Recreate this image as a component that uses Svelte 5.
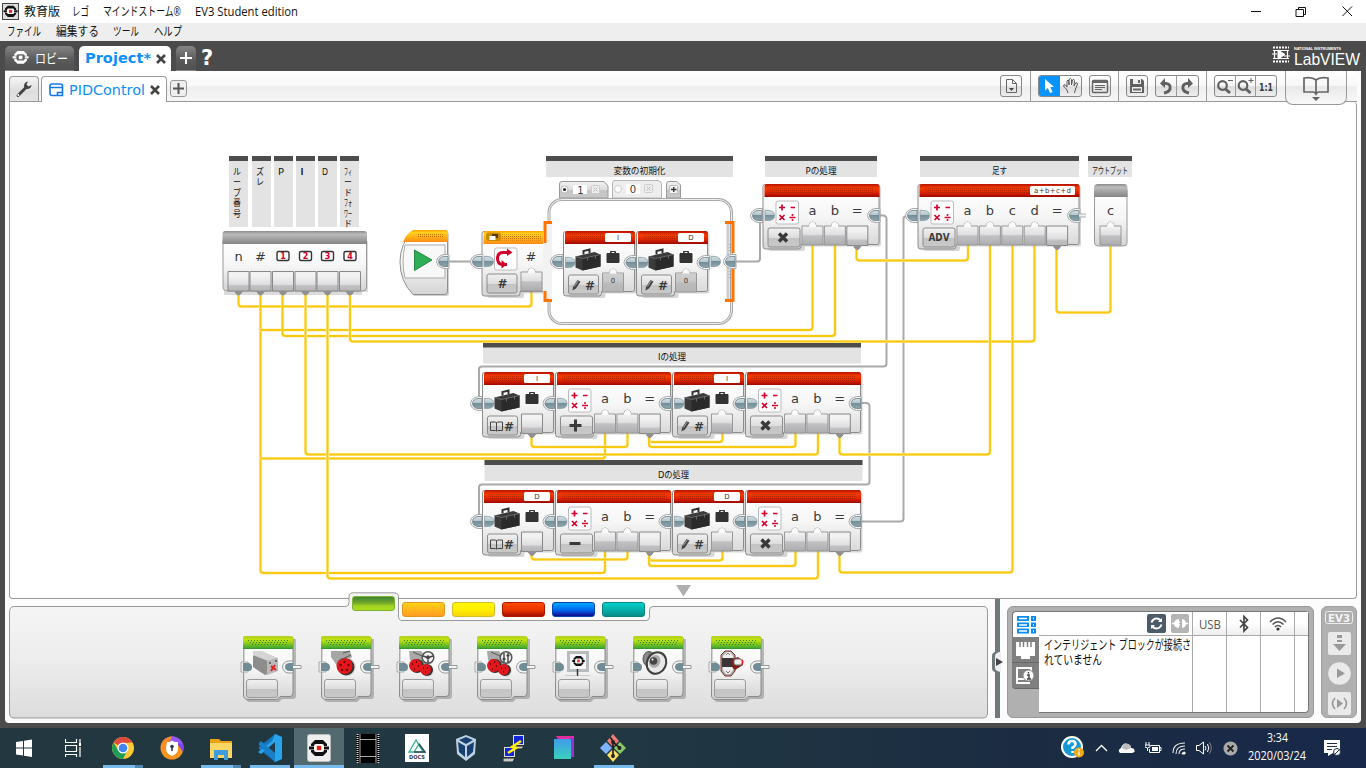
<script>
  const comments = [
    { x: 546, y: 156, w: 187, t: '変数の初期化', tw: 52 },
    { x: 765, y: 156, w: 112, t: 'Pの処理', tw: 31 },
    { x: 920, y: 156, w: 159, t: '足す', tw: 15 },
    { x: 1088, y: 156, w: 44, t: 'アウトプット', tw: 36 },
    { x: 483, y: 342.5, w: 378, t: 'Iの処理', tw: 28 },
    { x: 484.5, y: 460, w: 378, t: 'Dの処理', tw: 31 }
  ];
  const columns = [
    { x: 229, c: ['ル', 'ー', 'プ', '番', '号'] },
    { x: 252, c: ['ズ', 'レ'] },
    { x: 274, c: ['P'] },
    { x: 296, c: ['I'] },
    { x: 318, c: ['D'] },
    { x: 340, c: ['フィ', 'ー', 'ド', 'フォ', 'ワー', 'ド'] }
  ];
  const dataWires = [
    'M238.5 292V303.500Q238.500 306.500 241.500 306.500H528.500Q531.500 306.500 531.500 303.500V289',
    'M260.500 292V570Q260.500 573 263.500 573H602Q605 573 605 570V549',
    'M260.500 330H809.500Q812.500 330 812.500 327V244',
    'M260.500 458.500H602Q605 458.500 605 455.500V431',
    'M282.500 292V333Q282.500 336 285.500 336H832Q835 336 835 333V244',
    'M305.500 292V451.500Q305.500 454.500 308.500 454.500H815Q818 454.500 818 451.500V431',
    'M327.500 292V575.500Q327.500 578.500 330.500 578.500H815Q818 578.500 818 575.500V549',
    'M350 292V338.500Q350 341.500 353 341.500H1031.500Q1034.500 341.500 1034.500 338.500V244',
    'M856.500 246V257.500Q856.500 260.500 859.500 260.500H965Q968 260.500 968 257.500V244',
    'M990 244V451.500Q990 454.500 987 454.500H842.500Q839.500 454.500 839.500 451.500V434',
    'M1012.500 244V569.500Q1012.500 572.500 1009.500 572.500H842.500Q839.500 572.500 839.500 569.500V552',
    'M1056.500 246V309.500Q1056.500 312.500 1059.500 312.500H1107.500Q1110.500 312.500 1110.500 309.500V244',
    'M531.500 434V444Q531.500 447 534.500 447H624.500Q627.500 447 627.500 444V431',
    'M649 434V439Q649 442 652 442H719.500Q722.500 442 722.500 439V431',
    'M649 434V444Q649 447 652 447H792.500Q795.500 447 795.500 444V431',
    'M531.500 552V556.500Q531.500 559.500 534.500 559.500H624.500Q627.500 559.500 627.500 556.500V549',
    'M649 552V557.500Q649 560.500 652 560.500H719.500Q722.500 560.500 722.500 557.500V549',
    'M649 552V563Q649 566 652 566H792.500Q795.500 566 795.500 563V549'
  ];
  const flowWires = [
    'M446 261.500H474',
    'M734 261.500H757Q760 261.500 760 258.500V222Q760 216 755 216',
    'M878 215.500H883Q886.500 215.500 886.500 219V363.500Q886.500 366.500 883.500 366.500H482Q479 366.500 479 369.500V400',
    'M860 403H866Q869.500 403 869.500 406.500V481.500Q869.500 484.500 866.500 484.500H482Q479 484.500 479 487.500V518',
    'M860 521.500H900.500Q903.500 521.500 903.500 518.500V219Q903.500 216 907 216H912'
  ];
  const swatches = ['green', 'orange', 'yellow', 'red', 'blue', 'teal'];
  const tiles = ['medium', 'large', 'steer', 'tank', 'display', 'sound', 'brick'];
</script>

{#snippet fit(t, w, size, h, base, cls)}
  <svg class="fit {cls}" width={w} height={h}><text x="0" y={base} font-size={size} textLength={w} lengthAdjust="spacingAndGlyphs">{t}</text></svg>
{/snippet}

{#snippet logo(x, y, s, ink, mid, core)}
  <g transform="translate({x} {y}) scale({s})">
    <path d="M4 0H12L16 4V6H0V4ZM0 10H16V12L12 16H4L0 12Z" fill={ink} />
    <path d="M-2 6.500H3V9.500H-2ZM13 6.500H18V9.500H13Z" fill={ink} />
    <rect x="3" y="4" width="10" height="8" rx="2" fill={mid} />
    <rect x="5.800" y="5.800" width="4.400" height="4.400" fill={core} />
  </g>
{/snippet}

{#snippet outPlug(x, y)}
  <path d="M{x + 12} {y - 7}h-5q-7 1.500 -7.500 7q.5 5.500 7.500 7h5z" fill="#f4f4f4" stroke="#aaa" />
  <path d="M{x + 11} {y - 5}h-4q-5 .5 -5.500 5q.5 4.500 5.500 5h4z" fill="url(#plug)" stroke="#687f88" stroke-width=".8" />
{/snippet}
{#snippet inPlug(x, y)}
  <path d="M{x - 1} {y - 7}h4v14h-4z" fill="#eee" />
  <path d="M{x} {y - 5}h4q5.500 .5 5.500 5q0 4.500 -5.500 5h-4z" fill="url(#plug)" stroke="#8aa0a8" stroke-width=".8" />
{/snippet}

{#snippet slot(x, y, kind)}
  <g>
    {#if kind === 'in'}
      <path d="M{x - 10.500} {y}h7q0 -4 3.500 -4q3.500 0 3.500 4h7v19h-21z" fill="url(#slot)" stroke="#999" stroke-width="1" />
      <path d="M{x - 3.500} {y + 1}q0 -5 3.500 -5q3.500 0 3.500 5z" fill="#fbfbfb" />
    {:else}
      <path d="M{x - 10.500} {y}h21v19.500h-6.500l-2 3q-2 2 -4 0l-2 -3h-6.500z" fill="url(#slot)" stroke="#888" stroke-width="1" />
      <path d="M{x - 4} {y + 19}h8l-2 3.500q-2 2 -4 0z" fill="#909090" />
    {/if}
  </g>
{/snippet}

{#snippet shell(x, y, w, head)}
  <g>
    <path d="M{x + 2} {y}h{w - 4}q2.500 0 2.500 2.500v56q0 2 -2 2h-{w - 40}v2q0 2.500 -2.500 2.500h-31.500q-3 0 -3 -3v-59q0 -3 3 -3z" fill="#777" opacity=".3" transform="translate(1.500 1.500)" />
    <path d="M{x + 2} {y}h{w - 4}q2 0 2 2v56q0 2 -2 2h-{w - 38}v2q0 2.500 -2.500 2.500h-33q-2.500 0 -2.500 -2.500v-60q0 -2 2 -2z" fill="url(#body)" stroke="#8c8c8c" />
    <path d="M{x - 0.5} {y + 12.500}v-10.500q0 -2.500 2.500 -2.500h{w - 4}q2.500 0 2.500 2.500v10.500z" fill="url(#{head})" />
    <rect x={x + 5} y={y + 3} width={w - 10} height="6" fill="url(#holes)" />
  </g>
{/snippet}

{#snippet key(x, y, w)}
  <rect x={x + 3} y={y + 43.500} width={w} height="19" rx="2" fill="url(#key)" stroke="#8c8c8c" />
{/snippet}

{#snippet suitcase(x, y, s)}
  <g transform="translate({x} {y}) scale({s})">
    <path d="M8 6V2.500L14 1V4.500" fill="none" stroke="#333" stroke-width="2" />
    <path d="M0 8L19 3.500L25 6V18L7 22L0 19Z" fill="#3b3b3b" />
    <path d="M7 10L25 6V18L7 22Z" fill="#2a2a2a" />
    <path d="M0 8L7 10L25 6M12 9V12M20 7V10" stroke="#777" stroke-width=".8" fill="none" />
  </g>
{/snippet}

{#snippet mathBlock(x, y, w, op, ps, tag)}
  <g>
    {@render shell(x, y, w, 'hred')}
    {@render outPlug(x + w - 11, y + 31)}
    {@render inPlug(x, y + 31)}
    <rect x={x + 11} y={y + 16.500} width="22.500" height="23" rx="2" fill="#fff" stroke="#bbb" />
    <path d="M{x + 14} {y + 23}h6m-3 -3v6M{x + 25.500} {y + 23}h4.500M{x + 14.500} {y + 30.500}l5 5m0 -5l-5 5M{x + 24.500} {y + 33}h6" stroke="#d4002a" stroke-width="1.700" fill="none" />
    <circle cx={x + 27.500} cy={y + 30.500} r="1" fill="#d4002a" /><circle cx={x + 27.500} cy={y + 35.500} r="1" fill="#d4002a" />
    {@render key(x, y, 32)}
    {#if op === '×'}
      <path d="M{x + 14} {y + 49}l8 8m0 -8l-8 8" stroke="#3a3a3a" stroke-width="3.400" />
    {:else if op === '+'}
      <path d="M{x + 12} {y + 53}h12m-6 -6v12" stroke="#3a3a3a" stroke-width="3" />
    {:else if op === '-'}
      <path d="M{x + 12} {y + 53}h11" stroke="#3a3a3a" stroke-width="3" />
    {:else}
      <text class="dj" x={x + 19} y={y + 56.500} font-size="10" font-weight="bold" text-anchor="middle" textLength="21" lengthAdjust="spacingAndGlyphs">{op}</text>
    {/if}
    {#each ps as p, i}
      {@render slot(x + 47.500 + i * 22.400, y + 41.500, p === '=' ? 'out' : 'in')}
      <text class="dj" x={x + 47.500 + i * 22.400} y={y + 30.500} font-size="13" text-anchor="middle">{p}</text>
    {/each}
    {#if tag}
      <rect x={x + w - 49} y={y + 1.500} width="45" height="9" rx="1.500" fill="#fff" />
      <text class="dj" x={x + w - 45} y={y + 8.500} font-size="7" textLength="37">{tag}</text>
    {/if}
  </g>
{/snippet}

{#snippet varBlock(x, y, name, mode)}
  <g>
    {@render shell(x, y, 69, 'hred')}
    {@render outPlug(x + 59, y + 31)}
    {@render inPlug(x, y + 31)}
    {@render suitcase(x + 10, y + 17, 1)}
    <path d="M{x + 41.500} {y + 22}h12v9h-12zM{x + 45} {y + 22}v-2h5v2" fill="#333" stroke="#333" stroke-width="1" />
    <path d="M{x + 46} {y + 21}h3" stroke="#eee" />
    <rect x={x + 39.500} y={y + 1.500} width="26" height="9" rx="1.500" fill="#fff" />
    <text class="dj" x={x + 52.500} y={y + 8.500} font-size="7" text-anchor="middle">{name}</text>
    {@render key(x, y, 30)}
    {#if mode === 'read'}
      <path d="M{x + 12} {y + 50}v8.500M{x + 6} {y + 49.500}h5l1 1l1 -1h5v8.500h-5l-1 .5l-1 -.5h-5z" fill="none" stroke="#444" />
      {@render slot(x + 47.500, y + 41.500, 'out')}
    {:else}
      <path d="M{x + 7} {y + 59}l.5 -3.500l4.500 -7l3 1.500l-4.500 7z" fill="#444" />
      <path d="M{x + 9} {y + 55}l4 -6" stroke="#ccc" stroke-width=".7" />
      {@render slot(x + 47.500, y + 41.500, 'in')}
      {#if mode === 'const'}
        <rect x={x + 37.500} y={y + 42} width="20" height="18" fill="#b9b9b9" opacity=".6" />
        <text class="dj" x={x + 47.500} y={y + 51.500} font-size="7" text-anchor="middle">0</text>
      {/if}
    {/if}
    <text class="dj" x={x + 24.500} y={y + 58} font-size="12" font-weight="bold" text-anchor="middle">#</text>
  </g>
{/snippet}

<div class="window">
  <header class="title">
    <svg class="appicon" width="17" height="17"><rect x=".5" y=".5" width="16" height="16" fill="#ddd" stroke="#444" />{@render logo(3, 2.700, 0.7, '#111', '#fff', '#e22')}</svg>
    <div class="words">
      {@render fit('教育版', 36, 12, 18, 13, 'dark')}
      {@render fit('レゴ', 17, 12, 18, 13, 'dark')}
      {@render fit('マインドストーム®', 78, 12, 18, 13, 'dark')}
      {@render fit('EV3 Student edition', 103, 12, 18, 13, 'dark')}
    </div>
    <svg class="wincontrols" width="110" height="22" fill="none" stroke="#111">
      <path d="M5 10.500H15M50 8.500H57.500V15.500H50ZM52.500 8V6.500H59.500V13.500H58M96.500 5.500L106 15M106 5.500L96.500 15" />
    </svg>
  </header>
  <nav class="menu">
    {@render fit('ファイル', 34, 12, 17, 13, 'dark')}
    {@render fit('編集する', 43, 12, 17, 13, 'dark')}
    {@render fit('ツール', 26, 12, 17, 13, 'dark')}
    {@render fit('ヘルプ', 28, 12, 17, 13, 'dark')}
  </nav>

  <main class="frame">
    <div class="projects">
      <div class="ptab lobby">
        <svg width="17" height="17">{@render logo(2.200, 1, 0.8, '#fff', '#666', '#fff')}</svg>
        {@render fit('ロビー', 33, 13, 20, 15, 'white')}
      </div>
      <div class="ptab current">
        {@render fit('Project*', 66, 14, 20, 14, 'link dj bold')}
        <svg width="10" height="10"><path d="M1 1L9 9M9 1L1 9" stroke="#444" stroke-width="2.600" /></svg>
      </div>
      <div class="ptab add"><svg width="12" height="12"><path d="M6 0V12M0 6H12" stroke="#fff" stroke-width="2" /></svg></div>
      <span class="help">?</span>
      <div class="labview">
        <svg width="18" height="17" fill="none" stroke="#fff"><path d="M1 1.500H17M1 15.500H17" stroke-width="2" stroke-dasharray="2 1" /><path d="M1 4.500H17M1 12.500H17M2.500 4V13M15.500 4V13M0 8H5M12 10H18" stroke-width="1.200" /><path d="M6 4L13 8.500L6 13Z" fill="#fff" /></svg>
        <div class="lv">
          {@render fit('NATIONAL INSTRUMENTS', 47, 4, 5, 4, 'white bold lib')}
          {@render fit('LabVIEW', 66, 17, 16, 14, 'white lib')}
        </div>
      </div>
    </div>

    <div class="sheet">
      <div class="tools">
        <div class="ftab wrench"><svg width="18" height="18" viewBox="0 0 18 18"><path d="M3 15.500L11.500 7" stroke="#444" stroke-width="3" stroke-linecap="round" /><path d="M13 1.500Q9 2 9 6Q9.500 9 12 9Q16 9 16.500 5L13.500 6.500L11.500 4.500Z" fill="#444" /><circle cx="3.300" cy="15" r="1" fill="#fff" /></svg></div>
        <div class="ftab open">
          <svg width="15" height="14" fill="none" stroke="#1478e6" stroke-width="1.600"><path d="M1 11V3Q1 1 3 1H11Q13.500 1 13.500 3V12.500H8.500V9.500H13.500M1 4.500H13.500M1 10.500Q1 12.500 3 12.500H9" /></svg>
          {@render fit('PIDControl', 76, 14, 20, 15, 'link dj')}
          <svg width="10" height="10"><path d="M1 1L9 9M9 1L1 9" stroke="#444" stroke-width="2.600" /></svg>
        </div>
        <div class="plus"><svg width="11" height="11"><path d="M5.500 0V11M0 5.500H11" stroke="#555" stroke-width="2" /></svg></div>
        <div class="spacer"></div>
        <div class="group g1"><span class="btn"><svg width="20" height="20" fill="none" stroke="#666"><path d="M5.500 3.500H11.500L15.500 7.500V16.500H5.500ZM11.500 3.500V7.500H15.500" /><path d="M8 12H13L10.500 15Z" fill="#444" stroke="none" /></svg></span></div>
        <div class="group g2">
          <span class="btn pair">
            <svg class="on" width="21" height="20"><path d="M6 3V14.500L8.800 12L11 17L13.500 16L11.300 11H15Z" fill="#fff" /></svg>
            <svg width="21" height="20" fill="none" stroke="#555"><path d="M8 17L7 14L3.500 10Q3.500 8 5.500 9L7 11V5Q8 3 9 5V9V3.500Q10.500 1.500 11.500 3.500V9L12.500 4Q14 2.500 14.500 4.500L14 10L15.500 7Q17.500 6 17.500 8L15.500 13L14.500 17" /></svg>
          </span>
          <span class="btn"><svg width="20" height="20" fill="none" stroke="#666"><rect x="2.500" y="4.500" width="15" height="12" rx="1" stroke-width="1.500" /><path d="M3 5.500H17" stroke-width="3" /><path d="M5 9.500H15M5 11.500H15M5 13.500H12" /></svg></span>
        </div>
        <div class="group g3">
          <span class="btn"><svg width="20" height="20"><path d="M3 3H15L17 5V17H3Z" fill="#606060" /><path d="M6 3H14V8H6ZM5 11H15V16H5Z" fill="#eee" /><path d="M11 4H13V7H11ZM6 12.500H14V14.500H6Z" fill="#666" /></svg></span>
          <span class="btn pair">
            <svg width="21" height="20" fill="none" stroke="#606060" stroke-width="3"><path d="M8 7.500H10Q15 8 14 13Q13 16 8 17" /><path d="M9 2V12L4 7.500Z" fill="#606060" stroke="none" /></svg>
            <svg class="split" width="21" height="20" fill="none" stroke="#606060" stroke-width="3"><path d="M12 7.500H10Q5 8 6 13Q7 16 12 17" /><path d="M11 2V12L16 7.500Z" fill="#606060" stroke="none" /></svg>
          </span>
        </div>
        <div class="group g4">
          <span class="btn pair">
            <svg width="21" height="20" fill="none" stroke="#606060"><circle cx="7.500" cy="9.500" r="4.300" stroke-width="2.200" /><path d="M10.500 13L15 17" stroke-width="3" /><path d="M13 4.500H18" /></svg>
            <svg class="split" width="20" height="20" fill="none" stroke="#606060"><circle cx="7" cy="9.500" r="4.300" stroke-width="2.200" /><path d="M10 13L14.500 17" stroke-width="3" /><path d="M12.500 4.500H17.500M15 2V7" /></svg>
            <svg class="split" width="20" height="20"><text class="dj" x="3" y="14.500" font-size="10" font-weight="bold" fill="#777" textLength="14" lengthAdjust="spacingAndGlyphs">1:1</text></svg>
          </span>
        </div>
        <div class="book"><svg width="28" height="26" fill="none" stroke="#666" stroke-width="1.700"><path d="M14 4Q10 .5 2 2V16H11Q13 16 14 18Q15 16 17 16H26V2Q18 .5 14 4V17" /><path d="M10 21H18L14 25Z" fill="#666" stroke="none" /></svg></div>
      </div>

      <div class="canvas">
        <svg width="1346" height="496" viewBox="10 102 1346 496">
          <defs>
            <linearGradient id="body" x2="0" y2="1"><stop offset="0" stop-color="#fff" /><stop offset=".5" stop-color="#f6f6f6" /><stop offset="1" stop-color="#d4d4d4" /></linearGradient>
            <linearGradient id="slot" x2="0" y2="1"><stop offset=".2" stop-color="#f2f2f2" /><stop offset=".55" stop-color="#dedee0" /><stop offset=".6" stop-color="#c2c2c5" /><stop offset="1" stop-color="#adadb0" /></linearGradient>
            <linearGradient id="key" x2="0" y2="1"><stop offset="0" stop-color="#f2f2f2" /><stop offset=".5" stop-color="#ddd" /><stop offset=".55" stop-color="#c4c4c4" /><stop offset="1" stop-color="#c9c9c9" /></linearGradient>
            <linearGradient id="hred" x2="0" y2="1"><stop offset="0" stop-color="#b51400" /><stop offset=".12" stop-color="#d02000" /><stop offset=".3" stop-color="#f43c00" /><stop offset=".65" stop-color="#e02400" /><stop offset="1" stop-color="#9d0800" /></linearGradient>
            <linearGradient id="hyellow" x2="0" y2="1"><stop offset="0" stop-color="#ffa000" /><stop offset=".2" stop-color="#ffd21c" /><stop offset="1" stop-color="#ff8c14" /></linearGradient>
            <linearGradient id="hgray" x2="0" y2="1"><stop offset="0" stop-color="#8a8a8a" /><stop offset=".25" stop-color="#bcbcbc" /><stop offset="1" stop-color="#848484" /></linearGradient>
            <linearGradient id="plug" x2="0" y2="1"><stop offset="0" stop-color="#d5e0e4" /><stop offset=".45" stop-color="#b4c5cb" /><stop offset=".5" stop-color="#748f99" /><stop offset="1" stop-color="#8fa6ae" /></linearGradient>
            <pattern id="holes" width="2" height="2" patternUnits="userSpaceOnUse"><rect width="1" height="1" fill="#7a2000" opacity=".45" /></pattern>
          </defs>

          {#each comments as c}
            <g>
              <rect x={c.x} y={c.y} width={c.w} height="21" fill="#e3e3e3" />
              <rect x={c.x} y={c.y} width={c.w} height="5" fill="#4d4d4d" />
              <text class="jp" x={c.x + (c.w - c.tw) / 2} y={c.y + 17.500} font-size="9" textLength={c.tw} lengthAdjust="spacingAndGlyphs">{c.t}</text>
            </g>
          {/each}
          {#each columns as c}
            <g>
              <rect x={c.x} y="156" width="19" height="71" fill="#e3e3e3" />
              <rect x={c.x} y="156" width="19" height="5" fill="#4d4d4d" />
              {#each c.c as ch, i}
                <text class="jp" x={c.x + 4} y={174.500 + i * 10.500} font-size="9" textLength={ch === 'I' ? 4 : ch.length === 1 && ch < 'Z' ? 6 : 8} lengthAdjust="spacingAndGlyphs">{ch}</text>
              {/each}
            </g>
          {/each}

          {#each flowWires as d}<path {d} fill="none" stroke="#a9a9a9" stroke-width="2" />{/each}
          {#each dataWires as d}
            <g fill="none"><path {d} stroke="#ffeeaa" stroke-width="3.200" /><path {d} stroke="#f9c912" stroke-width="1.900" /></g>
          {/each}

          <!-- inputs -->
          <g>
            <path d="M223 240H367V291H361V294H223Z" fill="#999" opacity=".35" transform="translate(1 1)" />
            <path d="M223 240H366.500V288Q366 291 362 291H228Q223 291 223 287Z" fill="url(#body)" stroke="#999" />
            <path d="M222.500 244V234Q222.500 231 225.500 231H364Q367 231 367 234V244Z" fill="url(#hgray)" />
            {#each [238.500, 260.500, 283, 305.500, 327.500, 350] as x, i}
              {@render slot(x, 271.500, 'out')}
              {#if i < 2}
                <text class="dj" {x} y="261" font-size="13" text-anchor="middle">{i ? '#' : 'n'}</text>
              {:else}
                <rect x={x - 6} y="251.500" width="12" height="9" rx="1.500" fill="#fff" stroke="#333" stroke-width="1.400" />
                <text class="dj" {x} y="259" font-size="8" font-weight="bold" text-anchor="middle" style:fill="#d4002a">{i - 1}</text>
              {/if}
            {/each}
          </g>

          <!-- start -->
          <g>
            <path d="M413 231H445Q448 231 448 234V292Q448 295 445 295H413Q400 281 400 262Q400 243 413 231Z" fill="#777" opacity=".35" transform="translate(1 1)" />
            <path d="M413 231H445Q447.500 231 447.500 234V291Q447.500 294.500 445 294.500H413Q400 281 400 262Q400 243 413 231Z" fill="url(#body)" stroke="#909090" />
            <path d="M403 242Q406 234 413 230H445Q448 230 448 233V242Z" fill="url(#hyellow)" />
            <rect x="417" y="233" width="26" height="5" fill="url(#holes)" />
            <path d="M405 245H445V278H405Q401 262 405 245Z" fill="#f8f8f8" stroke="#aaa" />
            <path d="M414.500 250L432 260L414.500 270.500Z" fill="#2fae57" stroke="#238845" />
            {@render outPlug(437, 261.500)}
          </g>

          <!-- switch -->
          <g>
            <path d="M559.500 198V184Q559.500 181.500 562 181.500H604L608 186V198Z" fill="url(#key)" stroke="#999" />
            <path d="M612.500 198V183Q612.500 180.500 615 180.500H658Q661.500 181 661.500 184V198Z" fill="#eee" stroke="#b5b5b5" />
            <path d="M666.500 198V184Q666.500 181.500 669 181.500H677L680.500 185V198Z" fill="url(#key)" stroke="#999" />
            <rect x="669.500" y="185.500" width="8" height="8" rx="1" fill="#f5f5f5" stroke="#bbb" /><path d="M671 189.500H676.500M673.700 187V192" stroke="#333" stroke-width="1.400" />
            <circle cx="564.500" cy="189.500" r="3.500" fill="#fff" stroke="#bbb" /><circle cx="564.500" cy="189.500" r="1.500" fill="#222" />
            <circle cx="618" cy="189" r="3.500" fill="#fff" stroke="#ccc" />
            <rect x="573" y="185" width="14" height="9" fill="#fff" /><rect x="626" y="184" width="14" height="10" fill="#fff" />
            <text class="dj" x="580.500" y="193.500" font-size="10" text-anchor="middle">1</text>
            <text class="dj" x="633" y="193" font-size="10" text-anchor="middle">0</text>
            <g fill="#eee" stroke="#ccc"><rect x="591.500" y="185.500" width="8" height="8" rx="1" /><rect x="644.500" y="184.500" width="8" height="8" rx="1" /><path d="M593.500 187.500L597.500 191.500M597.500 187.500L593.500 191.500M646.500 186.500L650.500 190.500M650.500 186.500L646.500 190.500" stroke="#bbb" /></g>
            <rect x="549" y="199.500" width="182.500" height="124" rx="13" fill="#fff" stroke="#a8a8a8" stroke-width="3" />
            <rect x="549" y="199.500" width="182.500" height="124" rx="13" fill="none" stroke="#f0f0f0" stroke-width="1" />
            {@render shell(484, 231.500, 63, 'hyellow')}
            <path d="M543 227L552 222V302L543 293Z" fill="#f2f2f2" />
            <path d="M552 222.500H545V243M545 291V300.500H552M725 222.500H733V253M733 269V300.500H725" fill="none" stroke="#ff7300" stroke-width="3" />
            <path d="M728 224V299" stroke="#ccc" stroke-width="3" />
            <path d="M730 244V252M730 271V279" stroke="#888" stroke-dasharray="1 2" />
            <rect x="486" y="232.500" width="15" height="8.500" rx="3" fill="#c98a00" /><path d="M492 234H498V238H492Z" fill="#5a3a00" /><path d="M489.500 236H495.500V240H489.500Z" fill="#fff" />
            {@render outPlug(471, 261.500)}{@render inPlug(484, 261.500)}
            <rect x="494.500" y="248" width="22.500" height="22" rx="2" fill="#fff" stroke="#bbb" />
            <path d="M507 264.500H502Q497.500 264 497.500 258Q498 252.500 503 252.500H508" fill="none" stroke="#d4002a" stroke-width="3" />
            <path d="M507 248.500L512.500 252.500L507 256ZM501.500 260L507 264.500L501.500 268.500Z" fill="#d4002a" />
            {@render key(484, 230.500, 30)}
            <text class="dj" x="502.500" y="288" font-size="12" font-weight="bold" text-anchor="middle">#</text>
            <text class="dj" x="531" y="261" font-size="13" text-anchor="middle">#</text>
            {@render slot(531.500, 272, 'in')}
            {@render outPlug(551, 261.500)}
            {@render varBlock(565.500, 231.500, 'I', 'const')}
            {@render varBlock(638.500, 231.500, 'D', 'const')}
            {@render inPlug(711, 261.500)}{@render outPlug(724, 261.500)}
          </g>

          {@render outPlug(751, 215.500)}
          {@render mathBlock(765, 184.500, 114, '×', ['a', 'b', '='], '')}
          {@render outPlug(906, 215.500)}
          {@render mathBlock(920, 184.500, 159, 'ADV', ['a', 'b', 'c', 'd', '='], 'a+b+c+d')}
          <path d="M1080 215.500H1086" stroke="#aaa" stroke-width="4" /><path d="M1079 215.500H1086" stroke="#f3f3f3" stroke-width="2" />

          <g>
            <path d="M1094.500 190H1127V243Q1127 246 1123 246H1098Q1094.500 246 1094.500 242Z" fill="url(#body)" stroke="#999" />
            <path d="M1094 197V188Q1094 184 1098 184H1124Q1127.500 184 1127.500 188V197Z" fill="url(#hgray)" />
            {@render slot(1110.500, 226, 'in')}
            <text class="dj" x="1110.500" y="215" font-size="13" text-anchor="middle">c</text>
          </g>

          {#each [{ y: 372.500, n: 'I', op: '+' }, { y: 490.500, n: 'D', op: '-' }] as r}
            <g>
              {@render outPlug(471, r.y + 31)}
              {@render varBlock(484.500, r.y, r.n, 'read')}
              {@render mathBlock(557.500, r.y, 113, r.op, ['a', 'b', '='], '')}
              {@render varBlock(674.500, r.y, r.n, 'write')}
              {@render mathBlock(747.500, r.y, 113, '×', ['a', 'b', '='], '')}
            </g>
          {/each}
          <path d="M676 585H691L683.500 596.500Z" fill="#b0b0b0" />
        </svg>
      </div>

      <div class="lower">
        <section class="palette">
          <svg class="outline" width="980" height="128" viewBox="9 592 980 128">
            <defs><linearGradient id="panel" x2="0" y2="1"><stop offset="0" stop-color="#f6f6f6" /><stop offset=".5" stop-color="#eee" /><stop offset="1" stop-color="#dcdcdc" /></linearGradient></defs>
            <path d="M9.500 612Q9.500 606.500 14 606.500H345Q349 606.500 349 602V597Q349 592.800 353 592.800H394Q398.500 592.800 398.500 597V616Q398.500 620.500 402 620.500H646Q649.500 620.500 649.500 617V610Q649.500 606.500 653 606.500H983Q987.500 606.500 987.500 611V713Q987.500 718 983 718H14Q9.500 718 9.500 713Z" fill="url(#panel)" stroke="#999" />
          </svg>
          <div class="swatches">{#each swatches as s}<i class="sw {s}"></i>{/each}</div>
          <div class="tiles">
            {#each tiles as k}
              <svg width="66" height="70" viewBox="0 0 66 70">
                <path d="M5 3H54V60Q54 63 51 63H40L37 66H8Q4 66 4 62Z" fill="#666" opacity=".4" transform="translate(2 2)" />
                <path d="M4 3.500H53V59Q53 62.500 50 62.500H40L37 65.500H8Q3.500 65.500 3.500 61Z" fill="url(#body)" stroke="#8a8a8a" />
                <path d="M3 15V4Q3 2 5 2H51Q53 2 53 4V15Z" fill="url(#hgreen)" />
                <path d="M8 6.500H48M10 8.500H48M12 10.500H48" stroke="#278a27" stroke-dasharray="1 2" />
                <rect x="6.500" y="45.500" width="31" height="18" rx="2.500" fill="url(#key)" stroke="#999" />
                <path d="M1 28H8V38H1Z" fill="#eee" stroke="#aaa" /><path d="M3 29H9Q12 30 12 33Q12 37 9 37H3Z" fill="#728c96" />
                <path d="M53 27H48Q43 28 42.500 33Q43 38 48 39H53V34.500H61V31.500H53Z" fill="#f5f5f5" stroke="#999" /><path d="M53 29H49Q45 29.500 45 33Q45 36.500 49 37H53Z" fill="#728c96" />
                {#if k === 'medium'}
                  <path d="M13 22L20 17L37 24V36L25 41L13 33Z" fill="#8d8d8d" /><path d="M13 17H22L37 24L28 27L13 21Z" fill="#d5d5d5" /><path d="M27 27L38 24V37L27 41Z" fill="#b9b9b9" /><path d="M31 32L36 36M35 31L31 37" stroke="#d22" stroke-width="2" /><circle cx="30" cy="29" r="1" fill="#555" /><circle cx="36" cy="27" r="1" fill="#555" />
                {:else if k === 'large'}
                  <path d="M13 17H32L34 23L26 32L20 33L13 23Z" fill="#a6a6a6" /><ellipse cx="30" cy="33" rx="8" ry="9" fill="#ddd" /><ellipse cx="28" cy="33" rx="8.500" ry="8.500" fill="#333" /><circle cx="26.500" cy="32" r="8" fill="#e3171b" /><g fill="#7a0000"><circle cx="26.500" cy="28" r="1.300" /><circle cx="22.500" cy="31" r="1.300" /><circle cx="30.500" cy="31" r="1.300" /><circle cx="24" cy="36" r="1.300" /><circle cx="29" cy="36" r="1.300" /></g><path d="M25 19L32 17M22 26L33 21" stroke="#555" />
                {:else if k === 'steer' || k === 'tank'}
                  <path d="M13 17H25L32 27L25 34L14 26Z" fill="#a9a9a9" /><path d="M17 18L26 22" stroke="#555" /><circle cx="32" cy="37" r="6" fill="#ddd" /><circle cx="21" cy="32" r="7" fill="#333" /><circle cx="19.500" cy="31.500" r="6.500" fill="#e3171b" /><circle cx="31" cy="36" r="6" fill="#333" /><circle cx="29.500" cy="35.500" r="5.500" fill="#e3171b" /><path d="M16 30H17M20 28H21M22 32H23M18 35H19M27 34H28M31 34H32M29 38H30" stroke="#700" stroke-width="2" /><circle cx="32" cy="23.500" r="5.800" fill="#f3f3f3" stroke="#555" stroke-width="1.500" />
                  {#if k === 'steer'}<path d="M27 22L30 23L32 25L34 23L37 22M32 24V29" stroke="#444" stroke-width="1.500" fill="none" /><circle cx="32" cy="23" r="1.700" fill="#444" />{:else}<path d="M30 19V28M34 19V28M28.500 25H31.500M32.500 21.500H35.500" stroke="#333" stroke-width="1.300" />{/if}
                {:else if k === 'display'}
                  <rect x="15" y="17" width="22" height="21" fill="#b7bcc0" /><rect x="18" y="20" width="16" height="15" fill="#f6f6f6" />{@render logo(21.500, 22, 0.62, '#111', '#fff', '#e32')}<path d="M25.500 35V42" stroke="#333" stroke-width="1.500" /><path d="M13 41.500H25M27 41.500H38" stroke="#ccc" />
                {:else if k === 'sound'}
                  <ellipse cx="19" cy="25" rx="6" ry="7.500" fill="#8b8b8b" stroke="#555" /><path d="M19 18L29 18L22 40L15 31Z" fill="#777" /><ellipse cx="26.500" cy="29" rx="9.500" ry="11" transform="rotate(25 26.500 29)" fill="#e8e8e8" stroke="#3e3e3e" stroke-width="2" /><ellipse cx="25" cy="27.500" rx="5.500" ry="6.500" transform="rotate(25 25 27)" fill="#aaa" /><circle cx="23.500" cy="27" r="3.800" fill="#444" /><circle cx="22.500" cy="25.500" r="1" fill="#fff" />
                {:else}
                  <path d="M17 17H23L27 21V37L23 42H17L13 37V21Z" fill="#aaa" stroke="#7b3026" /><path d="M19 18H22L25 22V36L22 40H18L15 36V22Z" fill="#eee" /><rect x="14" y="24" width="11" height="9" fill="#3c3535" /><path d="M24 25L30 23L35 27V31L27 36L23 32Z" fill="#7b211b" /><rect x="26" y="25" width="8" height="6" rx="2" fill="#eee" stroke="#777" /><path d="M34 25Q37 28 34 31Z" fill="#f11" /><path d="M18 21L20 19L22 21M18 37L20 39L22 37" stroke="#777" fill="none" />
                {/if}
              </svg>
            {/each}
          </div>
        </section>

        <div class="divider"><svg width="16" height="22"><path d="M16 1H5Q1 1 1 5V17Q1 21 5 21H8V1" fill="#6f777a" /><path d="M10 .500Q4 2 4 5V17Q4 20 10 21Z" fill="#eee" /><path d="M5 7L12 11L5 15Z" fill="#444" /></svg></div>

        <section class="hardware">
          <div class="htabs">
            <div class="ht on"><svg width="19" height="18" fill="#0a8cf5"><path d="M0 0H12V5H0ZM14 0H19V5H14ZM0 6.500H12V11H0ZM14 6.500H19V11H14ZM0 12.500H12V17.500H0ZM14 12.500H19V17.500H14Z" /><path d="M2 2.500H10M2 9H10M2 15H10M16 2.500H17M16 9H17M16 15H17" stroke="#fff" stroke-width="1.500" /></svg></div>
            <div class="ht"><svg width="19" height="18"><path d="M0 1H19V15H14V18H5V15H0Z" fill="#fff" /><path d="M4 1V6M7.500 1V6M11.500 1V6M15 1V6" stroke="#808080" stroke-width="1.500" /></svg></div>
            <div class="ht"><svg width="19" height="18"><path d="M1 1H15V12H1ZM1 12V16H14M5 15V17" fill="none" stroke="#fff" stroke-width="2" /><circle cx="12.500" cy="8.500" r="5.500" fill="#fff" stroke="#808080" /><path d="M12.500 5V6.500M11 8H13V12M11 12H15" stroke="#444" stroke-width="1.500" fill="none" /></svg></div>
          </div>
          <div class="table">
            <div class="cell wide">
              <svg class="refresh" width="19" height="19" fill="none" stroke="#fff" stroke-width="2"><path d="M4.500 8.500Q6 4.500 9.500 4.500Q12.500 4.500 14 7M14.500 10.500Q13 14.500 9.500 14.500Q6.500 14.500 5 12" /><path d="M15 4V8H11ZM4 15V11H8Z" fill="#fff" stroke="none" /></svg>
              <svg class="connect" width="18" height="19"><path d="M1 9.500H4M14 9.500H17M9 8H6M9 11H6" stroke="#fff" stroke-width="1.500" /><path d="M8 5V14Q3 13.500 3 9.500Q3 5.500 8 5ZM11 5V14Q15 13.500 15 9.500Q15 5.500 11 5Z" fill="#fff" /></svg>
            </div>
            <div class="cell h">{@render fit('USB', 22, 13, 18, 14, 'gray')}</div>
            <div class="cell h"><svg width="10" height="18" fill="none" stroke="#444" stroke-width="1.700"><path d="M1 5L8.500 12.500L5 16V1.500L8.500 5L1 12.500" /></svg></div>
            <div class="cell h"><svg width="18" height="16" fill="none" stroke="#555" stroke-width="1.500"><path d="M1 6Q9 -2 17 6M3.500 8.500Q9 3 14.500 8.500M6 11Q9 8 12 11" /><circle cx="9" cy="13" r="1.600" fill="#333" stroke="none" /></svg></div>
            <div class="cell h"></div>
            <div class="cell body">
              {@render fit('インテリジェント ブロックが接続さ', 147, 13, 15, 12, 'dark')}
              {@render fit('れていません', 58, 13, 15, 12, 'dark')}
            </div>
            <div class="cell b"></div><div class="cell b"></div><div class="cell b"></div><div class="cell b"></div>
          </div>
        </section>

        <section class="ev3">
          <svg width="28" height="14"><rect x=".5" y=".5" width="27" height="12" rx="2" fill="#b0b0b0" stroke="#eee" /><text class="dj" x="3" y="10.500" font-size="10" font-weight="bold" textLength="22" lengthAdjust="spacingAndGlyphs" style:fill="#f4f4f4">EV3</text></svg>
          <svg width="23" height="23"><rect width="23" height="23" rx="2" fill="#eaeaea" /><path d="M9 3H14V6H9ZM9 8H14V10H9ZM5 12H18L11.500 19Z" fill="#999" /></svg>
          <svg width="23" height="23"><circle cx="11.500" cy="11.500" r="11.300" fill="#eaeaea" /><path d="M9 6.500L17 11.500L9 16Z" fill="#999" /></svg>
          <svg width="23" height="23"><rect width="23" height="23" rx="2" fill="#eaeaea" /><path d="M9 7L15 11.500L9 16Z" fill="#999" /><path d="M7 6Q2 11.500 7 17M16 6Q21 11.500 16 17" fill="none" stroke="#999" stroke-width="1.500" /></svg>
        </section>
      </div>
    </div>
  </main>

  <footer class="taskbar">
    <div class="item"><svg width="17" height="20"><path d="M0 4L7 3V9.500H0ZM8 2.800L16 1.500V9.500H8ZM0 10.500H7V17.500L0 16.500ZM8 10.500H16V19L8 17.700Z" fill="#fff" /></svg></div>
    <div class="item"><svg width="17" height="18" fill="none" stroke="#fff"><path d="M.500 0V3.500H11.500V0M.500 6.500H11.500V12.500H.500ZM.500 18V15.500H11.500V18M15 0V4M15 8V18" stroke-width="1.200" /><rect x="14" y="4" width="2" height="3" fill="#fff" stroke="none" /></svg></div>
    <div class="item run more">
      <svg width="24" height="24"><circle cx="12" cy="12" r="11" fill="#fcc934" /><path d="M12 12L2.500 6.500A11 11 0 0 1 21.500 6.500L12 7Z" fill="#e04a3f" /><path d="M2.500 6.500A11 11 0 0 0 12 23L16.500 14L7 14Z" fill="#1e9b56" /><circle cx="12" cy="12" r="5.500" fill="#fff" /><circle cx="12" cy="12" r="4.300" fill="#4285f4" /></svg>
    </div>
    <div class="item"><svg width="24" height="26"><circle cx="12" cy="13" r="11.500" fill="#f7941e" /><path d="M12 1.500A11.500 11.500 0 0 1 23 17L16 7Z" fill="#7a45ee" /><path d="M12 1.500A11.500 11.500 0 0 0 2 8L9 7L17 8L23 10Q20 2 12 1.500Z" fill="#9357ff" /><path d="M2 8Q0 13 3 18L8 10L12 1.500Q5 2 2 8Z" fill="#ff8c20" /><path d="M7 7Q12 7 12 5Q12 7 18 7V13Q18 19 12 21Q6 19 6 13Z" fill="#fff" /><circle cx="12" cy="11.500" r="1.800" fill="#28365c" /><path d="M12 12V16" stroke="#28365c" stroke-width="1.600" /></svg></div>
    <div class="item run more"><svg width="22" height="24"><path d="M0 3H9L11 5H22V20H0Z" fill="#e8a317" /><path d="M0 7H22V22H0Z" fill="#fdd765" /><path d="M4 14H18V24H14V19H8V24H4Z" fill="#409ddb" /></svg></div>
    <div class="item run"><svg width="24" height="28"><path d="M17 0L24 3V25L17 28L1 15Q0 14 1 13Z" fill="#1477bd" /><path d="M18 7L8 14L18 21Z" fill="#243944" /><path d="M0 18L14 7L17 0L24 3V25L17 28V8L3 20Z" fill="#28a4ea" /><path d="M1 9L3 7L17 19V28L1 11Z" fill="#1780c9" /></svg></div>
    <div class="item run focus"><svg width="24" height="28"><rect x=".5" y=".5" width="23" height="27" rx="2" fill="#eee" stroke="#bbb" />{@render logo(4, 6, 1, '#111', '#fff', '#e21')}</svg></div>
    <div class="item"><svg width="24" height="29"><path d="M0 0H24V29H0Z" fill="#000" /><path d="M1.500 0V29M22.500 0V29" stroke="#ddd" stroke-width="2" stroke-dasharray="1 1" /><path d="M4 0V29M20 0V29M4 5.500H20M4 22.500H20" stroke="#aaa" /></svg></div>
    <div class="item"><svg width="24" height="28"><path d="M0 0H24V28H0Z" fill="#fff" /><path d="M4 18L11 6L18 18ZM9 18L14 10L20 18Z" fill="none" stroke="#32b28b" stroke-width="1.300" /><path d="M14 10L20 18H9" fill="none" stroke="#34495e" stroke-width="1.300" /><text class="dj" x="4" y="25" font-size="5.500" font-weight="bold" textLength="16" lengthAdjust="spacingAndGlyphs">DOCS</text></svg></div>
    <div class="item"><svg width="22" height="28"><path d="M11 1L21 5L20 20L11 27L2 20L1 5Z" fill="#bfd2e4" /><path d="M11 3L18 6L11 10L4 6ZM3 8L10 12V23L4 18ZM19 8L12 12V23L18 18Z" fill="#173f70" /></svg></div>
    <div class="item"><svg width="24" height="28"><g stroke="#ddd"><rect x="10.500" y="1.500" width="10" height="9" fill="#1526d8" /><rect x="1.500" y="13.500" width="10" height="9" fill="#1526d8" /></g><path d="M9 12H21L19 15H9ZM0 24H12L10 28H0Z" fill="#c8c8c8" stroke="#222" /><path d="M18 7L9 13L13 14L5 19" stroke="#ffee16" stroke-width="2.500" fill="none" /></svg></div>
    <div class="item"><svg width="22" height="26"><defs><linearGradient id="wb" x2="0" y2="1"><stop stop-color="#409be9" /><stop offset="1" stop-color="#39d1bd" /></linearGradient></defs><path d="M3 1H21V22H16Z" fill="#e22fa0" /><path d="M16 3H21V22H16Z" fill="#9832d8" /><rect x="1" y="4" width="17" height="20" fill="url(#wb)" /></svg></div>
    <div class="item run"><svg width="26" height="30"><path d="M13 1L19 8L13 14L7 8Z" fill="#ef7c73" /><path d="M6 9L12 15L6 21L0 15Z" fill="#80b3ff" /><path d="M20 9L26 15L20 21L14 15Z" fill="#8ac967" /><path d="M13 16L19 22L13 29L7 22Z" fill="#ffe15d" /><path d="M10 4L13 8V24M13 9L20 15" stroke="#222" stroke-width="1.700" fill="none" /><circle cx="13" cy="9" r="2" fill="#222" /><circle cx="19.500" cy="15" r="2" fill="#222" /><circle cx="13" cy="23" r="2" fill="#222" /></svg></div>
    <div class="tray">
      <svg width="24" height="24"><circle cx="11" cy="11" r="10" fill="#1698d5" stroke="#fff" stroke-width="2" /><path d="M7.500 8.500Q7.500 5 11 5Q14.500 5 14.500 8Q14.500 10 11.500 11.500V13M11.500 15V17" fill="none" stroke="#fff" stroke-width="2.500" /><circle cx="18" cy="16.500" r="5" fill="#f5a914" /><path d="M18 15.500V19.500M18 13V14.500" stroke="#fff" stroke-width="1.300" /></svg>
      <svg width="13" height="8"><path d="M1 7L6.500 1.500L12 7" fill="none" stroke="#fff" stroke-width="1.300" /></svg>
      <svg width="17" height="12"><path d="M2 11Q-1 8 3 6Q5 0 10 2Q13 3 13 6Q17 6 16.500 10L14 11Z" fill="#fff" /><path d="M4 6Q5 0 10 2Q13 3 13 6L8 8Z" fill="#bbb" /></svg>
      <svg width="17" height="14" fill="none" stroke="#fff"><path d="M5.500 4.500H14.500V11.500H4.500V8M14.500 6.500H16V9.500H14.500M1 1V4M4 1V4M0 4H5V6Q2.500 8 0 6ZM2.500 7V10" /><path d="M7 6H13V10H7Z" fill="#fff" stroke="none" /></svg>
      <svg width="14" height="14" fill="none" stroke="#eee"><path d="M1 12Q1 2 13 2M4 13Q4 5 13 5M7 13Q7 8 13 8" stroke-width="1.100" /><path d="M10 13Q10 11 13 11V13Z" fill="#fff" /></svg>
      <svg width="17" height="14" fill="none" stroke="#fff"><path d="M.500 4.500H3L7.500 1V13L3 9.500H.500Z" /><path d="M9 5Q11 7 9 9.500M11.500 3Q14 7 11.500 11" /><path d="M13.500 1.500Q17 7 13.500 12.500" stroke="#888" /></svg>
      <svg width="15" height="15"><circle cx="7.500" cy="7.500" r="7" fill="#aaa" /><path d="M4.500 4.500L10.500 10.500M10.500 4.500L4.500 10.500" stroke="#222" stroke-width="1.800" /></svg>
      <div class="clock">{@render fit('3:34', 21, 12, 18, 13, 'white')}{@render fit('2020/03/24', 58, 12, 18, 13, 'white')}</div>
      <svg class="note" width="17" height="17"><path d="M0 0H16V13H9L4 16V13H0Z" fill="#fff" /><path d="M3 3.500H13M3 6.500H13M3 9.500H8" stroke="#1c2c45" /><circle cx="13" cy="12" r="3.500" fill="#fff" stroke="#1c2c45" /><path d="M11 14L15 10" stroke="#1c2c45" /></svg>
    </div>
  </footer>
</div>

<svg width="0" height="0" class="defs"><defs><linearGradient id="hgreen" x2="0" y2="1"><stop offset="0" stop-color="#b0ce20" /><stop offset=".3" stop-color="#c4e20c" /><stop offset=".9" stop-color="#46aa30" /><stop offset="1" stop-color="#338a30" /></linearGradient></defs></svg>

<style>
  :global(body) { margin: 0; overflow: hidden; }
  * { box-sizing: border-box; }
  svg { display: block; flex: none; }
  .defs { position: absolute; }
  .fit { overflow: visible; }
  .fit text { font-family: "Open Sans", "Noto Sans CJK JP", sans-serif; }
  .fit.dj text, .dj { font-family: "DejaVu Sans", sans-serif; fill: #3a3a3a; }
  .fit.lib text { font-family: "Liberation Sans", sans-serif; }
  .jp { font-family: "DejaVu Sans", "Noto Sans CJK JP", sans-serif; fill: #111; }
  .fit.bold text { font-weight: bold; }
  .fit.dark text { fill: #111; }
  .fit.gray text { fill: #555; }
  .fit.white text { fill: #fff; }
  .fit.link text { fill: #0d90f5; }
  .window { width: 1366px; height: 768px; display: flex; flex-direction: column; overflow: hidden; }
  .title { height: 23px; background: #fff; display: flex; align-items: center; padding-left: 2px; }
  .words { display: flex; margin-left: 5px; padding-top: 1px; gap: 14px; }
  .words > :global(:nth-child(1)) { margin-right: -2px; }
  .wincontrols { margin: 0 10px 0 auto; }
  .menu { height: 18px; background: #eee; display: flex; gap: 14.500px; padding-left: 7px; }
  .frame { height: 687px; background: #4b4b4b; padding: 5px 5px 0; border-bottom: 5px solid #4b4b4b; }
  .projects { height: 25px; display: flex; align-items: stretch; }
  .ptab { border-radius: 5px 5px 0 0; display: flex; align-items: center; justify-content: center; background: linear-gradient(#858585, #5c5c5c 55%, #505050); border-bottom: 1px solid #888; }
  .lobby { width: 69px; gap: 6px; }
  .current { width: 92px; margin-left: 5px; background: #fff; gap: 5px; border: 0; }
  .add { width: 20px; margin-left: 5px; }
  .help { color: #fff; font: bold 21px/25px "DejaVu Sans", sans-serif; margin-left: 5px; }
  .labview { margin-left: auto; display: flex; align-items: flex-start; gap: 4px; }
  .lv { width: 67px; }
  .sheet { height: 652px; background: #fcfcfc; border-radius: 0 0 4px 4px; }
  .tools { height: 31px; margin: 0 4px; border-bottom: 1px solid #999; display: flex; align-items: flex-end; background: linear-gradient(#fff, #f8f8f8 50%, #eee 53%, #f6f6f6); }
  .ftab { border: 1px solid #999; border-radius: 4px 4px 0 0; display: flex; align-items: center; justify-content: center; background: linear-gradient(#f5f5f5, #ddd 60%, #e5e5e5); }
  .wrench { width: 30px; height: 25px; border-bottom: 0; }
  .open { width: 126px; height: 26px; margin: 0 0 -1px 2px; background: #fff; border-bottom: 0; gap: 5px; position: relative; }
  .plus { width: 17px; height: 17px; border: 1px solid #999; border-radius: 3px; display: grid; place-items: center; margin: 0 0 4px 3px; background: #eee; }
  .spacer { flex: 1; }
  .group { height: 30px; display: flex; padding-top: 4px; gap: 7px; }
  .group + .group { border-left: 1px solid #999; padding-left: 7px; }
  .g1 { width: 30px; }
  .g2, .g3 { width: 88px; }
  .g4 { width: 79px; }
  .btn { height: 22px; display: flex; border: 1px solid #888; border-radius: 3px; background: linear-gradient(#fff, #f4f4f4 50%, #ddd 53%, #eee); overflow: hidden; }
  .on { background: #0a93f8; }
  .split { box-shadow: -1px 0 0 #999; }
  .book { width: 62px; height: 34px; margin: 0 10px -4px 0; border: 1px solid #999; border-top: 0; border-radius: 0 0 8px 8px; background: linear-gradient(#fff, #f6f6f6 45%, #e9e9e9 47%, #f8f8f8); display: flex; justify-content: center; padding-top: 5px; position: relative; }
  .canvas { margin: 0 4px; height: 497px; border: 1px solid #999; border-top: 0; border-radius: 0 4px 4px 4px; background: #fff; overflow: hidden; }
  .lower { height: 124px; display: flex; margin-left: 4px; }
  .palette { width: 980px; position: relative; margin-top: -7px; }
  .outline { position: absolute; left: 0; top: 0; }
  .swatches { position: relative; display: flex; gap: 7px; padding: 10px 0 0 343px; height: 42px; }
  .sw { width: 43px; height: 15px; border-radius: 3px; border: 1px solid; }
  .green { margin-top: -6px; background: linear-gradient(#3e8436, #72a72a 45%, #a5d420 70%, #a8dc20); border-color: #7eb335; }
  .orange { background: linear-gradient(#ffd216, #ff9b22); border-color: #df9820; }
  .yellow { background: linear-gradient(#fff800, #ffef00 50%, #f5d60c); border-color: #d8bc25; }
  .red { background: linear-gradient(#ff4a00, #e33200 60%, #a60c00); border-color: #b01800; }
  .blue { background: linear-gradient(#00a9ff, #0065ed 55%, #100a8c); border-color: #0644b0; }
  .teal { background: linear-gradient(#00d0cb, #07aaa5 60%, #078f88); border-color: #068680; }
  .tiles { position: relative; display: flex; gap: 12px; padding-left: 231px; }
  .divider { width: 5px; margin-left: 6px; height: 119px; background: #6f777a; display: flex; align-items: center; margin-top: 0; }
  .divider svg { margin-left: -4px; margin-top: 6px; }
  .hardware { width: 307px; height: 112px; margin: 7px 0 0 7px; background: #b0b0b0; border-radius: 6px; border: 1px solid #999; padding: 4px; display: flex; }
  .htabs { width: 27px; }
  .ht { height: 26px; background: #808080; border-bottom: 1px solid #666; display: grid; place-items: center; }
  .ht.on { background: #fff; height: 26px; border: 1px solid #777; border-width: 1px 0 0 1px; border-radius: 4px 0 0 0; }
  .ht:last-child { border-radius: 0 0 0 4px; }
  .table { flex: 1; display: grid; grid-template-columns: 154px 34px 34px 34px 1fr; grid-template-rows: 24px 1fr; background: #fff; border: 1px solid #777; border-left: 0; border-radius: 0 4px 4px 0; }
  .cell { border-right: 1px solid #aaa; border-bottom: 1px solid #aaa; display: flex; align-items: center; justify-content: center; }
  .cell:nth-child(5n) { border-right: 0; }
  .cell:nth-child(n + 6) { border-bottom: 0; border-left: 0; }
  .h { background: linear-gradient(#fff 45%, #eee); }
  .wide { justify-content: flex-end; gap: 5px; padding-right: 3px; }
  .refresh { background: #4c5b68; border-radius: 2px; }
  .connect { background: #b5b5b5; border-radius: 2px; }
  .body { flex-direction: column; align-items: flex-start; justify-content: flex-start; padding: 1px 0 0 5px; border-left: 1px solid #888; }
  .ev3 { width: 36px; height: 112px; margin: 7px 0 0 7px; background: #b0b0b0; border: 1px solid #a0a0a0; border-radius: 6px; display: flex; flex-direction: column; align-items: center; gap: 7px; padding-top: 4px; }
  .taskbar { height: 40px; background: linear-gradient(90deg, #22373f, #213843 45%, #1b2c42 75%, #18284a); display: flex; }
  .item { width: 49.080px; height: 40px; display: grid; place-items: center; position: relative; }
  .run::after { content: ""; position: absolute; left: 5px; right: 4px; bottom: 0; height: 3px; background: #76b9ed; }
  .more::after { background: linear-gradient(90deg, #76b9ed 80%, #5487af 80%); }
  .focus { background: #536970; }
  .focus::after { left: 0; right: 0; }
  .tray { margin-left: auto; display: flex; align-items: center; gap: 10px; padding-right: 25px; }
  .clock { width: 58px; height: 38px; display: flex; flex-direction: column; align-items: center; }
  .note { margin-left: 8px; }
</style>
